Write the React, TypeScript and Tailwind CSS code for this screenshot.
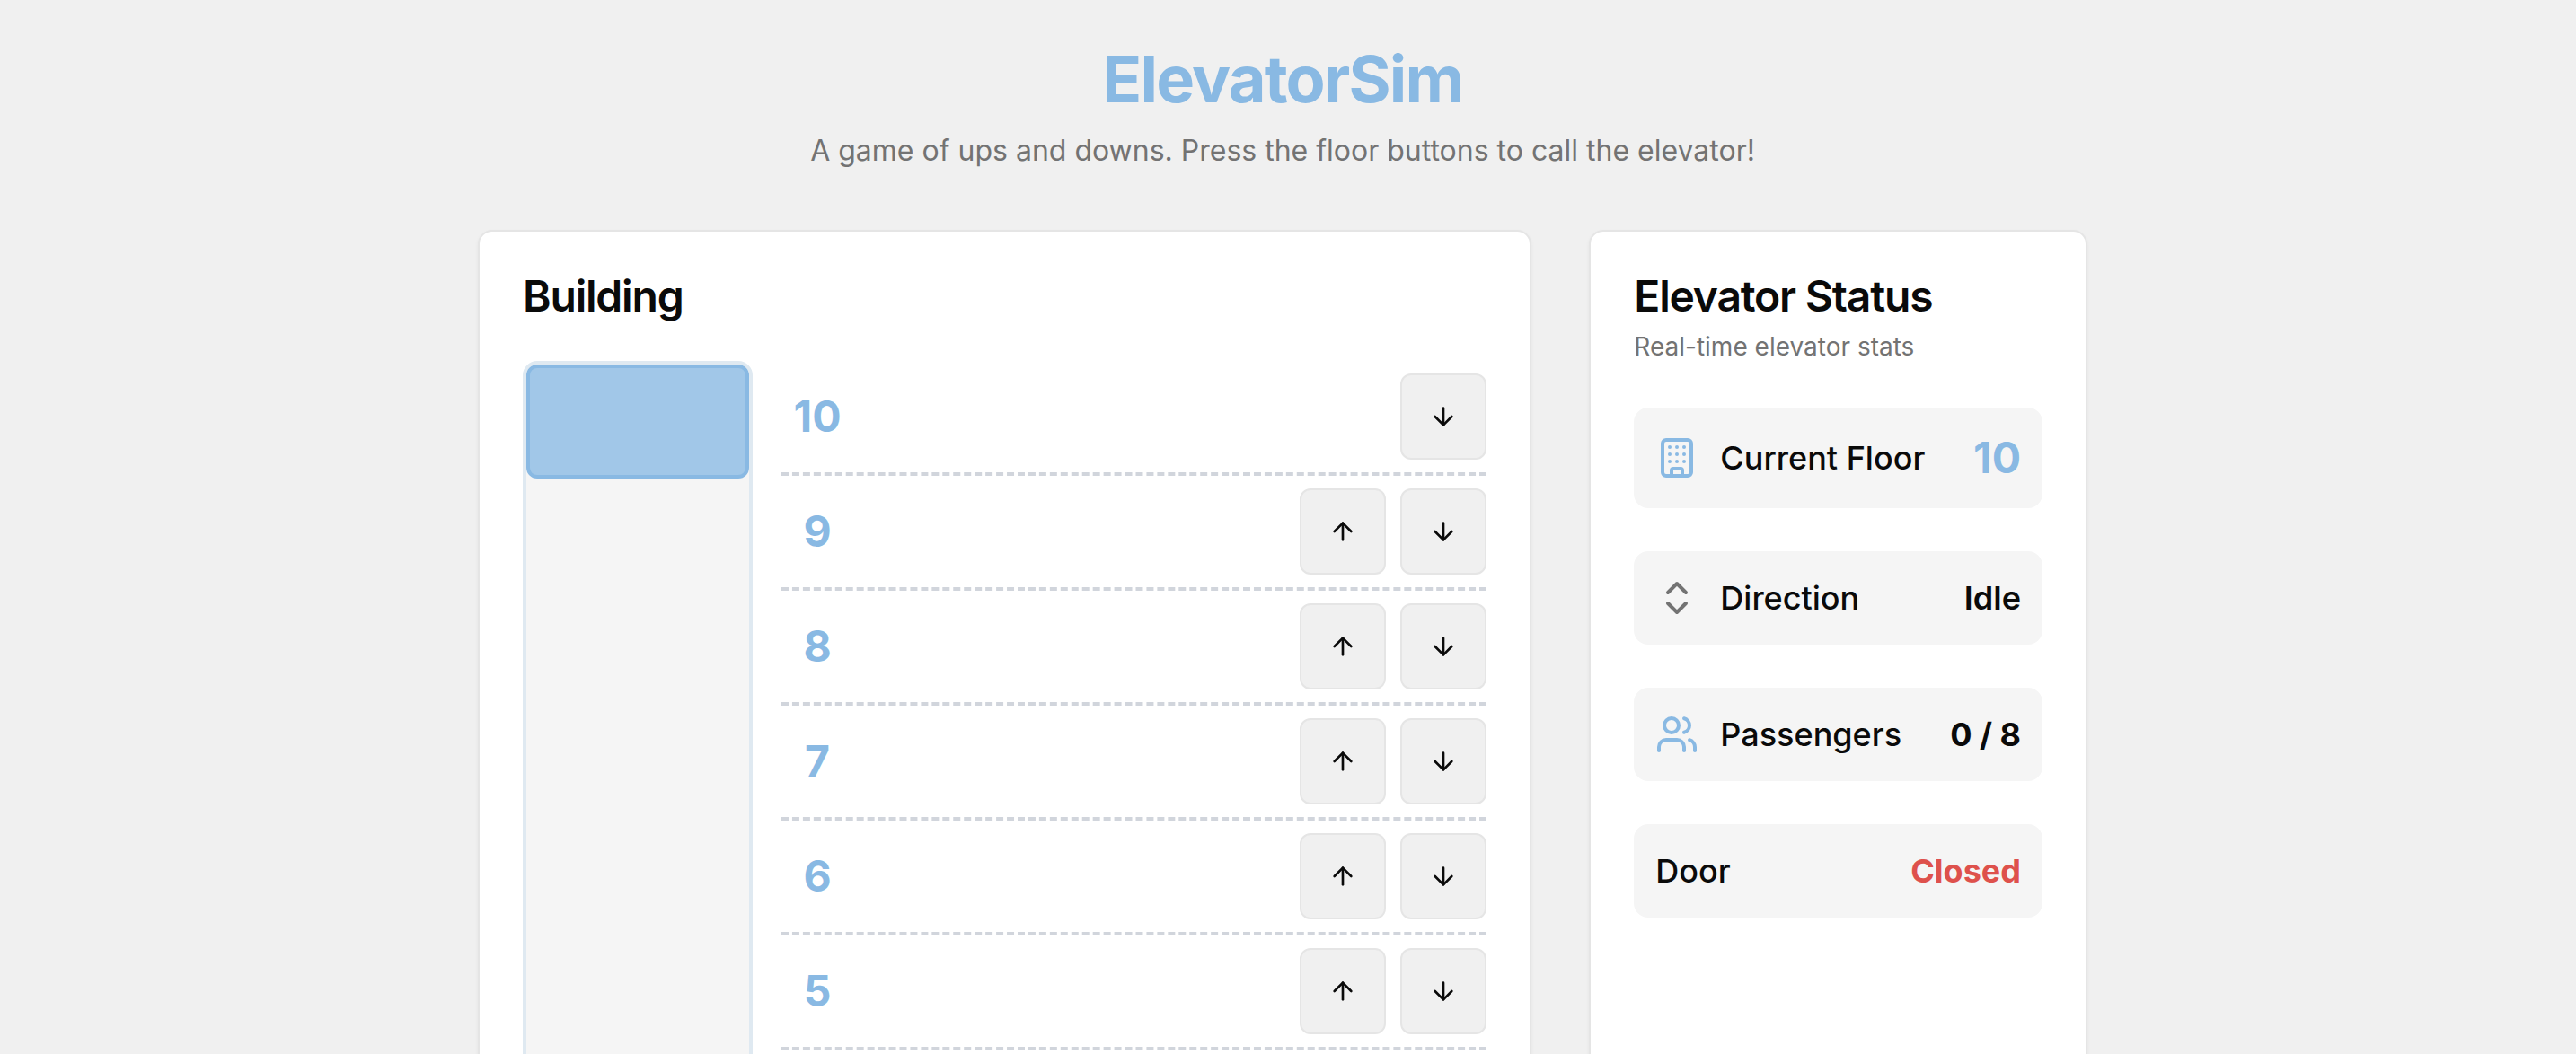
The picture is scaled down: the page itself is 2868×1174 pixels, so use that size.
import type { ReactNode } from "react";
import { ArrowDown, ArrowUp, Building, ChevronsUpDown, Users } from "lucide-react";

const TOP_FLOOR = 10;
const floors = Array.from({ length: TOP_FLOOR }, (_, i) => TOP_FLOOR - i);

function Card({ className = "", children }: { className?: string; children: ReactNode }) {
  return (
    <section className={`rounded-2xl border-2 border-[#e5e5e5] bg-white p-12 shadow-[0_2px_4px_rgba(0,0,0,0.05)] ${className}`}>
      {children}
    </section>
  );
}

function CallButton({ label, children }: { label: string; children: ReactNode }) {
  return (
    <button
      type="button"
      aria-label={label}
      className="flex size-24 items-center justify-center rounded-xl border-2 border-[#e5e5e5] bg-[#f0f0f0] text-[#0a0a0a]"
    >
      {children}
    </button>
  );
}

function FloorRow({ floor }: { floor: number }) {
  return (
    <li className="flex h-32 items-center justify-between border-b-4 border-dashed border-gray-300">
      <span className="w-20 text-center text-[48px] leading-[64px] font-bold text-[#89b9e3]">{floor}</span>
      <div className="flex gap-4">
        {floor < TOP_FLOOR && (
          <CallButton label={`Call up from floor ${floor}`}>
            <ArrowUp className="size-8" />
          </CallButton>
        )}
        {floor > 1 && (
          <CallButton label={`Call down from floor ${floor}`}>
            <ArrowDown className="size-8" />
          </CallButton>
        )}
      </div>
    </li>
  );
}

function Stat({ icon, label, children }: { icon?: ReactNode; label: string; children: ReactNode }) {
  return (
    <div className="flex items-center justify-between rounded-2xl bg-[#f5f5f5] p-6">
      <dt className="flex items-center gap-6 text-[36px] leading-[56px] font-medium">
        {icon}
        {label}
      </dt>
      <dd>{children}</dd>
    </div>
  );
}

export default function App() {
  return (
    <div className="min-h-screen bg-[#f0f0f0] py-12 pr-3 font-['Inter',sans-serif] text-[#0a0a0a]">
      <main className="mx-auto max-w-[1792px]">
        <header className="mb-16 text-center">
          <h1 className="text-[72px] leading-[80px] font-bold tracking-tight text-[#89b9e3]">ElevatorSim</h1>
          <p className="mt-4 text-[32px] leading-[48px] text-[#737373]">
            A game of ups and downs. Press the floor buttons to call the elevator!
          </p>
        </header>

        <div className="grid grid-cols-3 gap-16">
          <Card className="col-span-2">
            <h2 className="text-[48px] leading-none font-semibold tracking-tight">Building</h2>
            <div className="mt-12 flex gap-8">
              <div className="w-64 shrink-0 rounded-2xl border-4 border-[#dfe9f1] bg-[#f5f5f5]">
                <div className="h-[127px] rounded-xl border-4 border-[#89b9e3] bg-[#a1c7e8]" />
              </div>
              <ol className="flex-1">
                {floors.map((floor) => (
                  <FloorRow key={floor} floor={floor} />
                ))}
              </ol>
            </div>
          </Card>

          <Card>
            <h2 className="text-[48px] leading-none font-semibold tracking-tight">Elevator Status</h2>
            <p className="mt-3 text-[28px] leading-[40px] text-[#737373]">Real-time elevator stats</p>
            <dl className="mt-12 flex flex-col gap-12">
              <Stat icon={<Building className="size-12 text-[#89b9e3]" />} label="Current Floor">
                <span className="block text-[48px] leading-[64px] font-bold text-[#89b9e3]">10</span>
              </Stat>
              <Stat icon={<ChevronsUpDown className="size-12 text-[#737373]" />} label="Direction">
                <span className="block text-[36px] leading-[56px] font-semibold">Idle</span>
              </Stat>
              <Stat icon={<Users className="size-12 text-[#89b9e3]" />} label="Passengers">
                <span className="block text-[36px] leading-[56px] font-bold">0 / 8</span>
              </Stat>
              <Stat label="Door">
                <span className="block text-[36px] leading-[56px] font-bold text-[#de514c]">Closed</span>
              </Stat>
            </dl>
          </Card>
        </div>
      </main>
    </div>
  );
}
